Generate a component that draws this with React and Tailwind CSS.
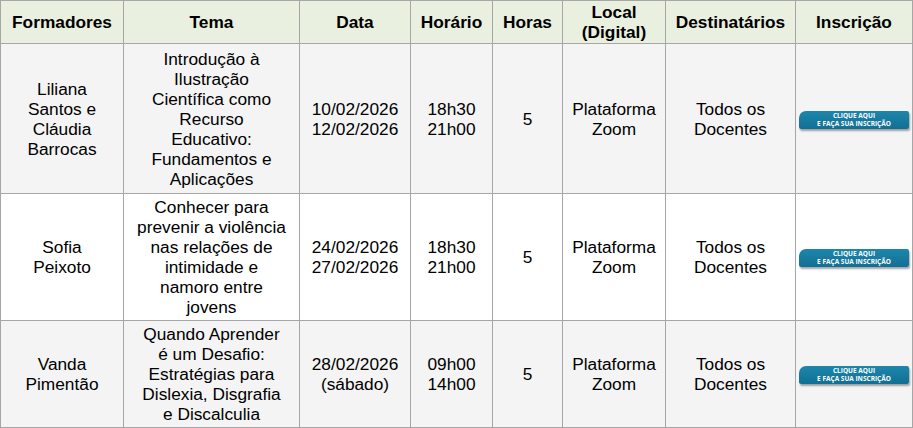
import React from "react";

function Btn() {
  return (
    <div className="inline-block align-middle">
      <div className="w-[110px] h-[18px] bg-[linear-gradient(#1e86ab,#116f94)] rounded-tl-[7px] rounded-tr-[2px] rounded-bl-[2px] rounded-br-[2px] shadow-[1px_2px_2px_rgba(0,0,0,0.35)] flex flex-col items-center justify-center text-white font-bold text-[6.5px] leading-[8px]" style={{ fontFamily: '"Open Sans", "Liberation Sans", sans-serif' }}>
        <span>CLIQUE AQUI</span>
        <span>E FAÇA SUA INSCRIÇÃO</span>
      </div>
    </div>
  );
}

const rows = [
  {
    bg: "bg-[#f4f4f4]",
    h: "h-[150px]",
    f: ["Liliana", "Santos e", "Cláudia", "Barrocas"],
    t: ["Introdução à", "Ilustração", "Científica como", "Recurso", "Educativo:", "Fundamentos e", "Aplicações"],
    d: ["10/02/2026", "12/02/2026"],
    hr: ["18h30", "21h00"],
  },
  {
    bg: "bg-white",
    h: "h-[127px]",
    f: ["Sofia", "Peixoto"],
    t: ["Conhecer para", "prevenir a violência", "nas relações de", "intimidade e", "namoro entre", "jovens"],
    d: ["24/02/2026", "27/02/2026"],
    hr: ["18h30", "21h00"],
  },
  {
    bg: "bg-[#f4f4f4]",
    h: "h-[107px]",
    f: ["Vanda", "Pimentão"],
    t: ["Quando Aprender", "é um Desafio:", "Estratégias para", "Dislexia, Disgrafia", "e Discalculia"],
    d: ["28/02/2026", "(sábado)"],
    hr: ["09h00", "14h00"],
  },
];

function Lines({ items }) {
  return items.map((l, i) => (
    <div key={i} className="whitespace-nowrap">{l}</div>
  ));
}

export default function App() {
  const td = "border border-[#a6a6a6] text-center align-middle p-0";
  return (
    <div className="w-[913px] h-[428px] bg-white text-black text-[17.3px] leading-[20px]" style={{ fontFamily: '"Liberation Sans", Arial, sans-serif' }}>
      <table className="table-fixed border-collapse w-[912px]">
        <colgroup>
          <col className="w-[123px]" />
          <col className="w-[176px]" />
          <col className="w-[111px]" />
          <col className="w-[82px]" />
          <col className="w-[70px]" />
          <col className="w-[103px]" />
          <col className="w-[130px]" />
          <col className="w-[117px]" />
        </colgroup>
        <thead>
          <tr className="h-[43px] bg-[#e9f0e0] font-bold">
            <th className={td}>Formadores</th>
            <th className={td}>Tema</th>
            <th className={td}>Data</th>
            <th className={td}>Horário</th>
            <th className={td}>Horas</th>
            <th className={td}><div>Local</div><div>(Digital)</div></th>
            <th className={td}>Destinatários</th>
            <th className={td}>Inscrição</th>
          </tr>
        </thead>
        <tbody>
          {rows.map((r, i) => (
            <tr key={i} className={`${r.bg} ${r.h}`}>
              <td className={td}><Lines items={r.f} /></td>
              <td className={td}><Lines items={r.t} /></td>
              <td className={td}><Lines items={r.d} /></td>
              <td className={td}><Lines items={r.hr} /></td>
              <td className={td}>5</td>
              <td className={td}><Lines items={["Plataforma", "Zoom"]} /></td>
              <td className={td}><Lines items={["Todos os", "Docentes"]} /></td>
              <td className={td}><Btn /></td>
            </tr>
          ))}
        </tbody>
      </table>
    </div>
  );
}
